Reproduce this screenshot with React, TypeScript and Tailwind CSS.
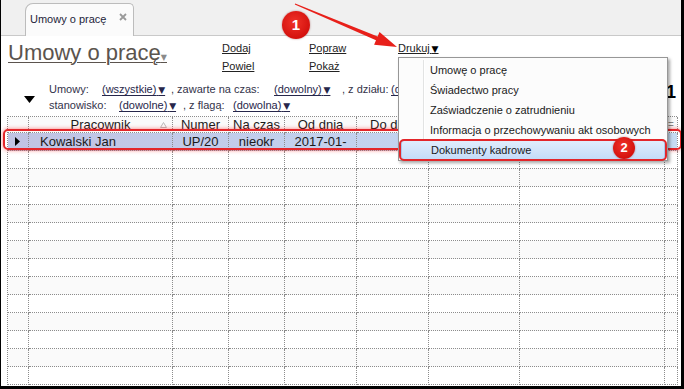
import React from "react";

const cols = [21, 144, 56, 56, 72, 72, 91, 145, 13];
const colW = [
  "w-[21px]",
  "w-[144px]",
  "w-[56px]",
  "w-[56px]",
  "w-[72px]",
  "w-[72px]",
  "w-[91px]",
  "w-[145px]",
  "w-[13px]",
];
const cell = "shrink-0 border-r border-b border-dotted border-[#8c8c8c]";

function Caret({ color = "" }: { color?: string }) {
  return <span className={`font-['DejaVu_Sans',sans-serif] text-[9px] ${color}`}>{"\u2009"}▼</span>;
}

function Pick({ children }: { children: React.ReactNode }) {
  return (
    <span className="underline decoration-1 underline-offset-2 text-[#26264a]">
      {children}
      <Caret />
    </span>
  );
}

function Tab() {
  return (
    <div className="h-[36px] bg-[#f0f0f0] border-b border-[#c9c9c9] flex items-end pl-[24px]">
      <div className="h-[33px] w-[109px] -mb-px bg-[#fbfbfb] border border-b-0 border-[#bcbcbc] rounded-tl-[8px] rounded-tr-[5px] flex pl-[4px] pr-[6px]">
        <span className="self-center pb-[2px] text-[#1e1e3a]">Umowy o pracę</span>
        <svg width="8" height="8" viewBox="0 0 8 8" className="ml-auto mt-[9px]">
          <path d="M1 1L7 7M7 1L1 7" stroke="#9a9a9a" strokeWidth="1.8" />
        </svg>
      </div>
    </div>
  );
}

function Toolbar() {
  return (
    <div className="flex pt-[3px] h-[39px]">
      <div className="w-[221px] shrink-0 pl-[7px] pt-[1px]">
        <span className="text-[22px] leading-[26px] text-[#5b544e] underline decoration-1 underline-offset-2">
          Umowy o pracę
          <span className="font-['DejaVu_Sans',sans-serif] text-[8px] text-[#8a8a8a]">▼</span>
        </span>
      </div>
      <div className="w-[87px] shrink-0 flex flex-col leading-[18px] text-[#222]">
        <span className="underline">Dodaj</span>
        <span className="underline">Powiel</span>
      </div>
      <div className="w-[89px] shrink-0 flex flex-col leading-[18px] text-[#222]">
        <span className="underline">Popraw</span>
        <span className="underline">Pokaż</span>
      </div>
      <div className="leading-[18px] text-[#222]">
        <span className="underline">
          Drukuj
          <Caret color="text-black" />
        </span>
      </div>
    </div>
  );
}

function Filters() {
  return (
    <div className="flex pt-[7px] h-[39px]">
      <div className="w-[48px] shrink-0 pl-[23px] pt-[14px]">
        <svg width="11" height="7" viewBox="0 0 11 7">
          <path d="M0 0H11L5.5 7Z" fill="#000" />
        </svg>
      </div>
      <div className="flex flex-col leading-[15px] text-[#33334a]">
        <div className="flex whitespace-nowrap">
          <span className="w-[53px] shrink-0">Umowy:</span>
          <span className="w-[69px] shrink-0"><Pick>(wszystkie)</Pick></span>
          <span className="w-[103px] shrink-0">, zawarte na czas:</span>
          <span className="w-[68px] shrink-0"><Pick>(dowolny)</Pick></span>
          <span className="w-[49px] shrink-0">, z działu:</span>
          <span className="w-[40px] overflow-hidden"><Pick>(dowolny)</Pick></span>
        </div>
        <div className="flex whitespace-nowrap">
          <span className="w-[70px] shrink-0">stanowisko:</span>
          <span className="w-[64px] shrink-0"><Pick>(dowolne)</Pick></span>
          <span className="w-[50px] shrink-0">, z flagą:</span>
          <span><Pick>(dowolna)</Pick></span>
        </div>
      </div>
      <div className="ml-auto pr-[5px] text-[18px] font-bold leading-[20px] text-black">1</div>
    </div>
  );
}

function Grid() {
  const headers = ["", "Pracownik", "Numer", "Na czas", "Od dnia", "Do dnia", "", "", "="];
  const row = ["", "Kowalski Jan", "UP/20", "nieokr", "2017-01-", "", "", "", ""];
  return (
    <div className="mt-[2px] ml-[6px] w-[670px] border-t border-l border-dotted border-[#8c8c8c] text-[13px] text-[#1a1a1a]">
      <div className="flex h-[16px] bg-[#fafafa]">
        {headers.map((h, i) => (
          <div
            key={i}
            className={`${cell} ${colW[i]} relative leading-[15px] text-center overflow-hidden whitespace-nowrap ${
              i === 8 ? "text-[10px] text-[#888]" : ""
            }`}
          >
            {h}
            {i === 1 && (
              <svg width="7" height="6" viewBox="0 0 7 6" className="absolute right-[5px] top-[5px]">
                <path d="M3.5 0.5L6.5 5.5H0.5Z" fill="none" stroke="#b8b8b8" />
              </svg>
            )}
          </div>
        ))}
      </div>
      <div className="flex h-[18px] bg-gradient-to-r from-[#c1c3e3] via-[#c3d2ee] to-[#c6dcf3]">
        {row.map((t, i) => (
          <div
            key={i}
            className={`${cell} ${colW[i]} leading-[17px] overflow-hidden whitespace-nowrap ${
              i === 1 ? "text-left pl-[11px]" : "text-center"
            }`}
          >
            {i === 0 ? (
              <svg width="5" height="9" viewBox="0 0 5 9" className="ml-[7px] mt-[4px]">
                <path d="M0 0L5 4.5L0 9Z" fill="#000" />
              </svg>
            ) : (
              t
            )}
          </div>
        ))}
      </div>
      {Array.from({ length: 13 }).map((_, r) => (
        <div key={r} className={`flex h-[18px] ${r % 2 === 1 ? "bg-[#fafafa]" : "bg-white"}`}>
          {cols.map((_, i) => (
            <div key={i} className={`${cell} ${colW[i]}`} />
          ))}
        </div>
      ))}
    </div>
  );
}

function Menu() {
  const items = [
    "Umowę o pracę",
    "Świadectwo pracy",
    "Zaświadczenie o zatrudnieniu",
    "Informacja o przechowywaniu akt osobowych",
    "Dokumenty kadrowe",
  ];
  return (
    <div className="absolute left-[397px] top-[57px] w-[270px] h-[104px] bg-[#fcfcfc] border border-[#979797] shadow-[2px_2px_3px_rgba(0,0,0,0.35)] pt-[2px] flex flex-col text-[#1a1a1a]">
      <div className="absolute left-[24px] top-[2px] bottom-[2px] w-[2px] border-l border-[#e2e3e3] bg-white" />
      {items.map((t, i) =>
        i === 4 ? (
          <div key={t} className="relative h-[20px] mx-[2px] flex items-center pl-[29px] rounded-[3px] border border-[#a9c7ec] bg-gradient-to-b from-[#e0edfc] to-[#c4dcf8]">
            {t}
            <div className="absolute -inset-x-[3px] -inset-y-[2px] border-2 border-[#e3262a] rounded-[5px]" />
          </div>
        ) : (
          <div key={t} className="relative h-[20px] flex items-center pl-[31px]">
            {t}
          </div>
        )
      )}
    </div>
  );
}

function Badge({ n, className }: { n: string; className: string }) {
  return (
    <div
      className={`absolute rounded-full bg-[radial-gradient(circle_at_45%_40%,#f03228,#d20f0c_75%)] shadow-[0_0_2px_rgba(120,0,0,0.5)] text-white font-bold flex items-center justify-center ${className}`}
    >
      {n}
    </div>
  );
}

export default function App() {
  return (
    <div className="relative w-[684px] h-[389px] overflow-hidden bg-white border-l border-r-[3px] border-b-[3px] border-black font-['Liberation_Sans',Arial,sans-serif] text-[11px]">
      <Tab />
      <Toolbar />
      <Filters />
      <Grid />

      <div className="absolute left-[2px] top-[129px] w-[679px] h-[21px] border-2 border-[#e3262a] rounded-[5px] shadow-[0_0_4px_rgba(255,40,40,0.6)]" />
      <Menu />
      <Badge n="2" className="left-[612px] top-[137px] w-[22px] h-[22px] text-[13px]" />

      <svg width="684" height="389" className="absolute left-0 top-0 pointer-events-none">
        <polygon
          points="293.8,4.5 375,40.2 373.1,44.8 396,47 378.5,32 376.6,36.6 294.2,3.5"
          fill="#e8201a"
        />
      </svg>
      <Badge n="1" className="left-[281px] top-[11px] w-[28px] h-[28px] text-[15px]" />
    </div>
  );
}
